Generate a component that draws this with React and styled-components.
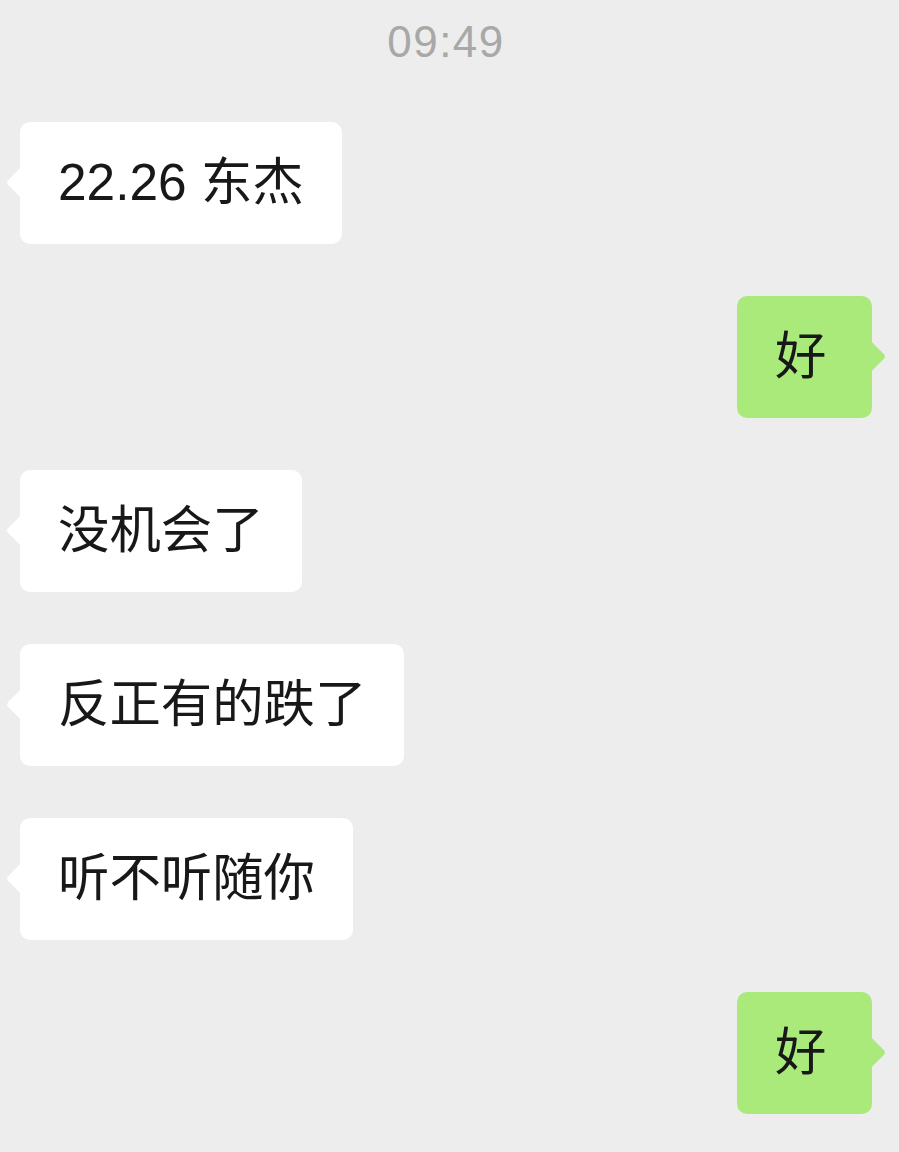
import React from "react";
import styled, { createGlobalStyle, css } from "styled-components";

const Global = createGlobalStyle`
  html, body { margin: 0; padding: 0; background: #ededed; }
  body { font-family: "Liberation Sans", "Noto Sans CJK SC", sans-serif; }
`;

const Page = styled.div`
  width: 899px;
  height: 1152px;
  box-sizing: border-box;
  padding: 0 27px 0 20px;
  background: #ededed;
  display: flex;
  flex-direction: column;
  overflow: hidden;
`;

const Time = styled.div`
  height: 84px;
  margin-bottom: 38px;
  display: flex;
  align-items: center;
  justify-content: center;
  padding-right: 0px;
  font-family: "Liberation Sans", sans-serif;
  font-size: 44px;
  letter-spacing: 1.5px;
  color: #a8a8a8;
`;

const List = styled.div`
  display: flex;
  flex-direction: column;
  gap: 52px;
`;

const Row = styled.div`
  display: flex;
  justify-content: ${(p) => (p.$mine ? "flex-end" : "flex-start")};
`;

const Bubble = styled.div`
  position: relative;
  box-sizing: border-box;
  height: 122px;
  min-width: 135px;
  padding: 0 38px;
  display: flex;
  align-items: center;
  border-radius: 10px;
  font-family: "Liberation Sans", "Noto Sans CJK SC", sans-serif;
  font-size: 51.4px;
  line-height: 1.2;
  color: #181818;
  white-space: nowrap;
  background: ${(p) => (p.$mine ? "#a9ea7a" : "#ffffff")};

  &::before {
    content: "";
    position: absolute;
    top: 50%;
    width: 21px;
    height: 21px;
    margin-top: -11px;
    background: inherit;
    transform: rotate(45deg);
    ${(p) =>
      p.$mine
        ? css`
            right: -10px;
            border-top-right-radius: 4px;
          `
        : css`
            left: -10px;
            border-bottom-left-radius: 4px;
          `}
  }
`;

const messages = [
  { mine: false, text: "22.26 东杰" },
  { mine: true, text: "好" },
  { mine: false, text: "没机会了" },
  { mine: false, text: "反正有的跌了" },
  { mine: false, text: "听不听随你" },
  { mine: true, text: "好" },
];

export default function App() {
  return (
    <>
      <Global />
      <Page>
        <Time>09:49</Time>
        <List>
          {messages.map((m, i) => (
            <Row key={i} $mine={m.mine}>
              <Bubble $mine={m.mine}>{m.text}</Bubble>
            </Row>
          ))}
        </List>
      </Page>
    </>
  );
}
